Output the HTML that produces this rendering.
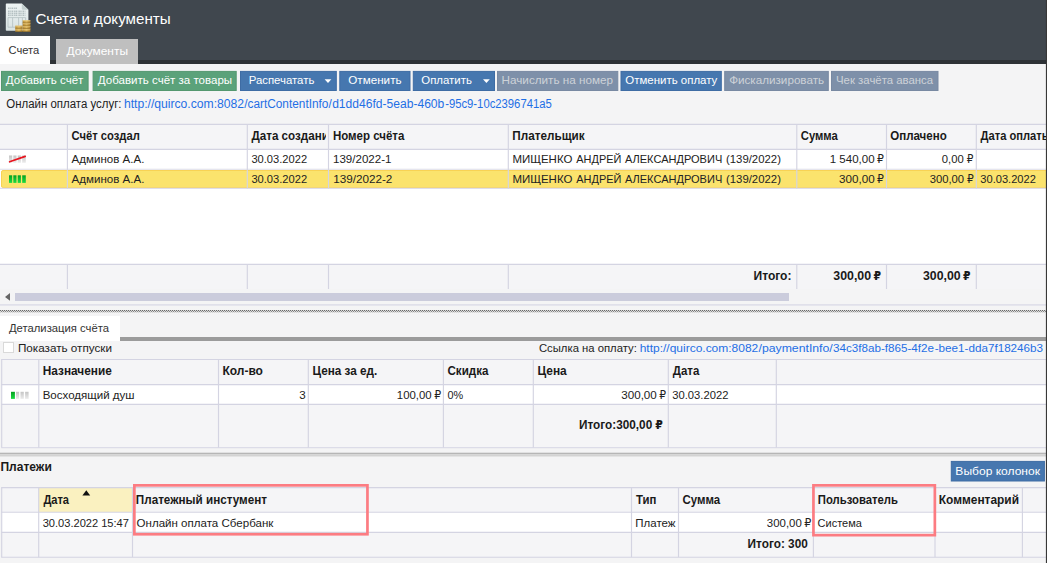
<!DOCTYPE html>
<html lang="ru">
<head>
<meta charset="utf-8">
<title>Счета и документы</title>
<style>
html,body{margin:0;padding:0}
body{width:1047px;height:563px;overflow:hidden;position:relative;background:#f4f4f5;font-family:"Liberation Sans","DejaVu Sans",sans-serif}
.b{position:absolute;box-sizing:border-box}
.t{position:absolute;white-space:pre;line-height:1;transform-origin:0 0}
.s{display:inline-block;transform-origin:0 0}
.clip{position:absolute;left:0;top:0;height:563px;overflow:hidden}
.hl{position:absolute;height:1px;background:#d5d5e3}
.vl{position:absolute;width:1px;background:#d5d5e3}
.btn{position:absolute;top:71px;height:20px}
.g{background:#5ba27a}
.bl{background:#4676ae}
.ds{background:#7e90a9}
</style>
</head>
<body>
<!-- header -->
<div class="b" style="left:0;top:0;width:1047px;height:60px;background:#40474e"></div>
<div class="b" style="left:0;top:60px;width:1047px;height:4px;background:#2e3236"></div>
<div class="b" style="left:0;top:36px;width:50px;height:28px;background:#fff"></div>
<div class="b" style="left:55.6px;top:39px;width:82.6px;height:25px;background:#bfbfbf"></div>
<svg class="b" style="left:5px;top:3px" width="27" height="30" viewBox="0 0 27 30">
<defs><linearGradient id="pg" x1="0" y1="0" x2="0" y2="1"><stop offset="0" stop-color="#eef4f4"/><stop offset="1" stop-color="#d9e3e3"/></linearGradient>
<linearGradient id="gd" x1="0" y1="0" x2="1" y2="0"><stop offset="0" stop-color="#b88c36"/><stop offset="0.5" stop-color="#dcb65e"/><stop offset="1" stop-color="#a87c2c"/></linearGradient></defs>
<path d="M1.6 0.4h15.2l6.6 6.4v20.2a0.8 0.8 0 0 1-0.8 0.8H1.6a0.8 0.8 0 0 1-0.8-0.8V1.2a0.8 0.8 0 0 1 0.8-0.8z" fill="url(#pg)"/>
<path d="M16.8 0.4l6.6 6.4h-5.4a1.2 1.2 0 0 1-1.2-1.2z" fill="#c4d0d0"/>
<g stroke="#93a2a5" stroke-width="0.9" stroke-dasharray="1.6 0.7 0.9 0.5"><path d="M3 5.2h9.5M3 8.2h17.5M3 10.2h17.5M3 12.2h17.5"/></g>
<g stroke="#b4c0c2" stroke-width="0.8" fill="none"><path d="M3 14.6h17.6v9.6H3zM7.6 14.6v9.6M13.6 14.6v9.6M17.4 14.6v9.6"/></g>
<rect x="10.3" y="22.7" width="7.2" height="6" fill="url(#gd)"/>
<rect x="17.7" y="17.3" width="7.7" height="11.4" fill="url(#gd)"/>
<g stroke="#f0d68c" stroke-width="0.7"><path d="M10.3 23.1h7.2M10.3 26h7.2M17.7 17.7h7.7M17.7 20.5h7.7M17.7 23.3h7.7M17.7 26.1h7.7"/></g>
<g stroke="#8f6a22" stroke-width="0.6"><path d="M10.3 25.4h7.2M10.3 28.5h7.2M17.7 19.9h7.7M17.7 22.7h7.7M17.7 25.5h7.7M17.7 28.5h7.7"/></g>
</svg>
<!-- toolbar -->
<svg class="b" style="left:0;top:68px" width="1047" height="26" viewBox="0 68 1047 26"><rect x="1.5" y="71.4" width="86.6" height="19.1" fill="#5ba27a" stroke="#54986f"/><rect x="93.1" y="71.4" width="143.1" height="19.1" fill="#5ba27a" stroke="#54986f"/><rect x="240.5" y="71.4" width="95.8" height="19.1" fill="#4677af" stroke="#3e6ca4"/><rect x="339.8" y="71.4" width="70.2" height="19.1" fill="#4677af" stroke="#3e6ca4"/><rect x="413.3" y="71.4" width="81.2" height="19.1" fill="#4677af" stroke="#3e6ca4"/><rect x="497.5" y="71.4" width="120.3" height="19.1" fill="#7e90a9" stroke="#7889a2"/><rect x="621.0" y="71.4" width="100.3" height="19.1" fill="#4677af" stroke="#3e6ca4"/><rect x="724.7" y="71.4" width="103.6" height="19.1" fill="#7e90a9" stroke="#7889a2"/><rect x="831.5" y="71.4" width="106.5" height="19.1" fill="#7e90a9" stroke="#7889a2"/><path d="M324.6 79.3h6.8l-3.4 3.8z" fill="#fff"/><path d="M483.0 79.3h6.8l-3.4 3.8z" fill="#fff"/></svg>

<!-- table 1 -->
<div class="b" style="left:0;top:124px;width:1046px;height:25px;background:#f5f5f7"></div>
<div class="b" style="left:0;top:149px;width:1046px;height:116px;background:#fff"></div>
<div class="b" style="left:1px;top:170px;width:1048px;height:18px;background:#fbe36d;border:1px solid #f8d254;border-radius:2px"></div>
<div class="b" style="left:0;top:264.5px;width:1046px;height:24.5px;background:#f5f5f7"></div>
<!-- col lines header+rows -->
<!-- col lines footer -->
<!-- scrollbar -->
<div class="b" style="left:15px;top:293px;width:774.3px;height:7.7px;background:#cbccdc"></div>
<svg class="b" style="left:5px;top:292px" width="6" height="10" viewBox="0 0 6 10"><path d="M5 1v7.8L0 4.9z" fill="#666"/></svg>
<!-- status icons -->
<svg class="b" style="left:8px;top:154px" width="20" height="10" viewBox="0 0 20 10">
<defs><linearGradient id="gr" x1="0" y1="0" x2="0" y2="1"><stop offset="0" stop-color="#c4c4c4"/><stop offset="1" stop-color="#ececec"/></linearGradient></defs>
<rect x="1" y="1.5" width="3.2" height="7.3" fill="url(#gr)"/><rect x="5.3" y="1.5" width="3.2" height="7.3" fill="url(#gr)"/><rect x="9.7" y="1.5" width="3.2" height="7.3" fill="url(#gr)"/><rect x="14.2" y="1.5" width="3.6" height="7.3" fill="url(#gr)"/>
<path d="M1.6 7.8L17.2 2.4" stroke="#e8141e" stroke-width="1.7" stroke-linecap="round"/>
</svg>
<svg class="b" style="left:8px;top:174px" width="20" height="10" viewBox="0 0 20 10">
<defs><linearGradient id="gn" x1="0" y1="0" x2="0" y2="1"><stop offset="0" stop-color="#04a020"/><stop offset="1" stop-color="#1cdc44"/></linearGradient></defs>
<rect x="1" y="1.3" width="3.2" height="7.6" fill="url(#gn)"/><rect x="5.3" y="1.3" width="3.2" height="7.6" fill="url(#gn)"/><rect x="9.7" y="1.3" width="3.2" height="7.6" fill="url(#gn)"/><rect x="14.2" y="1.3" width="3.6" height="7.6" fill="url(#gn)"/>
</svg>
<!-- splitter dotted -->
<div class="b" style="left:0;top:310px;width:1046px;height:1px;background:repeating-linear-gradient(90deg,#6a6a6a 0,#6a6a6a 1px,#d8d8d8 1px,#d8d8d8 2px)"></div>
<div class="b" style="left:0;top:311px;width:1046px;height:1px;background:repeating-linear-gradient(90deg,#dcdcdc 0,#dcdcdc 1px,#8a8a8a 1px,#8a8a8a 2px)"></div>
<div class="b" style="left:0;top:312px;width:1046px;height:1px;background:repeating-linear-gradient(90deg,#d6d6d6 0,#d6d6d6 1px,#ececec 1px,#ececec 2px)"></div>
<!-- detail tab -->
<div class="b" style="left:0;top:316px;width:120.3px;height:25px;background:#fff"></div>
<div class="b" style="left:120.3px;top:337px;width:925.7px;height:4px;background:#9b9b9b"></div>
<div class="b" style="left:2.5px;top:341.5px;width:11px;height:11px;background:#fff;border:1px solid #d9d9d9"></div>
<!-- table 2 -->
<div class="b" style="left:1px;top:359.5px;width:1045px;height:25px;background:#f5f5f7"></div>
<div class="b" style="left:1px;top:384.5px;width:1045px;height:20px;background:#fff"></div>
<div class="b" style="left:1px;top:404.5px;width:1045px;height:42.5px;background:#f5f5f7"></div>
<svg class="b" style="left:10px;top:390px" width="20" height="10" viewBox="0 0 20 10">
<rect x="1" y="1.8" width="3.9" height="7.1" fill="url(#gn)"/><rect x="6" y="1.8" width="3.1" height="7.1" fill="url(#gr)"/><rect x="10.5" y="1.8" width="3.3" height="7.1" fill="url(#gr)"/><rect x="15.1" y="1.8" width="3.5" height="7.1" fill="url(#gr)"/>
</svg>
<!-- splitter 2 -->
<!-- payments -->
<svg class="b" style="left:940px;top:458px" width="107" height="26" viewBox="940 458 107 26"><rect x="951.3" y="461.4" width="93.1" height="19.6" fill="#4677af" stroke="#3e6ca4"/></svg>
<div class="b" style="left:1px;top:488px;width:1045px;height:24px;background:#f5f5f7"></div>
<div class="b" style="left:39px;top:488px;width:93.5px;height:24px;background:#faf1c0"></div>
<div class="b" style="left:1px;top:512px;width:1045px;height:20px;background:#fff"></div>
<div class="b" style="left:1px;top:532px;width:1045px;height:25px;background:#f5f5f7"></div>
<svg class="b" style="left:82px;top:490px" width="9" height="6" viewBox="0 0 9 6"><path d="M4.3 0.2L8.2 5.4H0.4z" fill="#111"/></svg>
<svg class="b" style="left:0;top:0" width="1047" height="563" viewBox="0 0 1047 563" fill="none"><path d="M0 124.3H1046" stroke="#d4d4e2" stroke-width="1.15"/><path d="M0 149.3H1046" stroke="#d4d4e2" stroke-width="1.15"/><path d="M0 264.4H1046" stroke="#d4d4e2" stroke-width="1.15"/><path d="M0 169.2H1046" stroke="#dcdce8" stroke-width="1.15"/><path d="M0 188.4H1046" stroke="#dedee9" stroke-width="1.15"/><path d="M0 304.8H1046" stroke="#e0e0ea" stroke-width="1.7"/><path d="M67.4 124.3V188.4" stroke="#d4d4e2" stroke-width="1.15"/><path d="M67.4 264.4V289" stroke="#d4d4e2" stroke-width="1.15"/><path d="M247.3 124.3V188.4" stroke="#d4d4e2" stroke-width="1.15"/><path d="M247.3 264.4V289" stroke="#d4d4e2" stroke-width="1.15"/><path d="M328.5 124.3V188.4" stroke="#d4d4e2" stroke-width="1.15"/><path d="M328.5 264.4V289" stroke="#d4d4e2" stroke-width="1.15"/><path d="M508.3 124.3V188.4" stroke="#d4d4e2" stroke-width="1.15"/><path d="M508.3 264.4V289" stroke="#d4d4e2" stroke-width="1.15"/><path d="M796.8 124.3V188.4" stroke="#d4d4e2" stroke-width="1.15"/><path d="M796.8 264.4V289" stroke="#d4d4e2" stroke-width="1.15"/><path d="M886.5 124.3V188.4" stroke="#d4d4e2" stroke-width="1.15"/><path d="M886.5 264.4V289" stroke="#d4d4e2" stroke-width="1.15"/><path d="M976.3 124.3V188.4" stroke="#d4d4e2" stroke-width="1.15"/><path d="M976.3 264.4V289" stroke="#d4d4e2" stroke-width="1.15"/><path d="M1.2 359.5H1046" stroke="#d4d4e2" stroke-width="1.15"/><path d="M1.2 384.6H1046" stroke="#d4d4e2" stroke-width="1.15"/><path d="M1.2 404.3H1046" stroke="#d4d4e2" stroke-width="1.15"/><path d="M1.2 447.6H1046" stroke="#dcdce8" stroke-width="1.15"/><rect x="0" y="452.7" width="1046" height="1.5" fill="#b6b6b6"/><rect x="0" y="454.2" width="1046" height="2.3" fill="#d3d3d3"/><path d="M1.7 359.5V447.6" stroke="#d4d4e2" stroke-width="1.15"/><path d="M38.8 359.5V447.6" stroke="#d4d4e2" stroke-width="1.15"/><path d="M218.5 359.5V447.6" stroke="#d4d4e2" stroke-width="1.15"/><path d="M308.3 359.5V447.6" stroke="#d4d4e2" stroke-width="1.15"/><path d="M443.4 359.5V447.6" stroke="#d4d4e2" stroke-width="1.15"/><path d="M533.3 359.5V447.6" stroke="#d4d4e2" stroke-width="1.15"/><path d="M668.3 359.5V447.6" stroke="#d4d4e2" stroke-width="1.15"/><path d="M776.3 359.5V447.6" stroke="#d4d4e2" stroke-width="1.15"/><path d="M1.2 487.6H1046" stroke="#d4d4e2" stroke-width="1.15"/><path d="M1.2 512.2H1046" stroke="#d4d4e2" stroke-width="1.15"/><path d="M1.2 532.3H1046" stroke="#d4d4e2" stroke-width="1.15"/><path d="M1.2 557.2H1046" stroke="#d4d4e2" stroke-width="1.15"/><path d="M1.7 487.6V557.2" stroke="#d4d4e2" stroke-width="1.15"/><path d="M38.7 487.6V557.2" stroke="#d4d4e2" stroke-width="1.15"/><path d="M132.5 487.6V557.2" stroke="#d4d4e2" stroke-width="1.15"/><path d="M631.5 487.6V557.2" stroke="#d4d4e2" stroke-width="1.15"/><path d="M678.5 487.6V557.2" stroke="#d4d4e2" stroke-width="1.15"/><path d="M813.4 487.6V557.2" stroke="#d4d4e2" stroke-width="1.15"/><path d="M935.0 487.6V557.2" stroke="#d4d4e2" stroke-width="1.15"/><path d="M1022.4 487.6V557.2" stroke="#d4d4e2" stroke-width="1.15"/></svg>
<!-- red highlight boxes -->
<svg class="b" style="left:0;top:470px" width="1047" height="80" viewBox="0 470 1047 80" fill="none" stroke="#fc7c82" stroke-width="2.7"><rect x="134.35" y="485.35" width="233.1" height="48.9"/><rect x="813.45" y="485.35" width="121.4" height="49.8"/></svg>
<!-- text -->
<span class="t" style="left:0;top:0;font-size:15.2px;color:#ffffff;transform:translate(35.42px,11.08px) scaleX(0.9978)">Счета и документы</span>
<span class="t" style="left:0;top:0;font-size:11.5px;color:#333;transform:translate(8.50px,44.75px) scaleX(0.9698)">Счета</span>
<span class="t" style="left:0;top:0;font-size:11.5px;color:#ffffff;transform:translate(66.42px,46.15px) scaleX(1.0387)">Документы</span>
<span class="t" style="left:0;top:0;font-size:11.5px;color:#ffffff;transform:translate(5.83px,75.15px) scaleX(1.0037)">Добавить счёт</span>
<span class="t" style="left:0;top:0;font-size:11.5px;color:#ffffff;transform:translate(97.83px,75.15px) scaleX(1.0029)">Добавить счёт за товары</span>
<span class="t" style="left:0;top:0;font-size:11.5px;color:#ffffff;transform:translate(248.70px,75.15px) scaleX(0.9888)">Распечатать</span>
<span class="t" style="left:0;top:0;font-size:11.5px;color:#ffffff;transform:translate(348.29px,75.15px) scaleX(1.0134)">Отменить</span>
<span class="t" style="left:0;top:0;font-size:11.5px;color:#ffffff;transform:translate(421.30px,75.15px) scaleX(0.9920)">Оплатить</span>
<span class="t" style="left:0;top:0;font-size:11.5px;color:#cdd2d8;transform:translate(501.55px,75.15px) scaleX(1.0172)">Начислить на номер</span>
<span class="t" style="left:0;top:0;font-size:11.5px;color:#ffffff;transform:translate(625.31px,75.15px) scaleX(0.9964)">Отменить оплату</span>
<span class="t" style="left:0;top:0;font-size:11.5px;color:#cdd2d8;transform:translate(729.13px,75.15px) scaleX(1.0145)">Фискализировать</span>
<span class="t" style="left:0;top:0;font-size:11.5px;color:#cdd2d8;transform:translate(836.02px,75.15px) scaleX(0.9900)">Чек зачёта аванса</span>
<span class="t" style="left:0;top:0;font-size:12.0px;color:#222;transform:translate(6.35px,97.63px) scaleX(0.9531)">Онлайн оплата услуг:</span>
<span class="t" style="left:0;top:0;font-size:12.0px;color:#1f6fe5;transform:translate(123.89px,97.63px)"><span class="s" style="transform:translateX(0.00px) scaleX(1.0124)">http://quirco.com:8082</span><span class="s" style="transform:translateX(1.33px) scaleX(0.9864)">/cartContentInfo/</span><span class="s" style="transform:translateX(1.24px) scaleX(1.0064)">d1dd46fd-5eab-460b</span><span class="s" style="transform:translateX(2.25px) scaleX(0.9399)">-95c9-10c2396741a5</span></span>
<span class="t" style="left:0;top:0;font-size:12.4px;color:#1a1a1a;transform:translate(71.55px,129.91px) scaleX(0.9048);font-weight:700">Счёт создал</span>
<div class="clip" style="width:325.5px"><span class="t" style="left:0;top:0;font-size:12.4px;color:#1a1a1a;transform:translate(251.47px,129.91px) scaleX(0.9386);font-weight:700">Дата создания</span></div>
<span class="t" style="left:0;top:0;font-size:12.4px;color:#1a1a1a;transform:translate(332.88px,129.91px) scaleX(0.9285);font-weight:700">Номер счёта</span>
<span class="t" style="left:0;top:0;font-size:12.4px;color:#1a1a1a;transform:translate(512.35px,129.91px) scaleX(0.9457);font-weight:700">Плательщик</span>
<span class="t" style="left:0;top:0;font-size:12.4px;color:#1a1a1a;transform:translate(800.76px,129.91px) scaleX(0.9100);font-weight:700">Сумма</span>
<span class="t" style="left:0;top:0;font-size:12.4px;color:#1a1a1a;transform:translate(890.22px,129.91px) scaleX(0.9306);font-weight:700">Оплачено</span>
<div class="clip" style="width:1045.5px"><span class="t" style="left:0;top:0;font-size:12.4px;color:#1a1a1a;transform:translate(980.54px,129.91px) scaleX(0.8990);font-weight:700">Дата оплаты</span></div>
<span class="t" style="left:0;top:0;font-size:11.5px;color:#222;transform:translate(71.61px,154.05px) scaleX(1.0040)">Админов А.А.</span>
<span class="t" style="left:0;top:0;font-size:11.5px;color:#222;transform:translate(251.38px,154.15px) scaleX(0.9679)">30.03.2022</span>
<span class="t" style="left:0;top:0;font-size:11.5px;color:#222;transform:translate(332.98px,154.15px) scaleX(1.0058)">139/2022-1</span>
<span class="t" style="left:0;top:0;font-size:11.5px;color:#222;transform:translate(512.43px,154.15px)"><span class="s" style="transform:translateX(0.00px) scaleX(0.9966)">МИЩЕНКО </span><span class="s" style="transform:translateX(0.88px) scaleX(0.9499)">АНДРЕЙ </span><span class="s" style="transform:translateX(-1.50px) scaleX(0.9587)">АЛЕКСАНДРОВИЧ </span><span class="s" style="transform:translateX(-5.44px) scaleX(0.9874)">(139/2022)</span></span>
<span class="t" style="left:0;top:0;font-size:11.5px;color:#222;transform:translate(829.74px,154.15px)"><span class="s" style="transform:translateX(0.00px) scaleX(1.0007)">1 540,00 </span><span class="s" style="transform:translateX(-0.80px) scaleX(0.9422)">₽</span></span>
<span class="t" style="left:0;top:0;font-size:11.5px;color:#222;transform:translate(941.73px,154.15px)"><span class="s" style="transform:translateX(0.00px) scaleX(0.9810)">0,00 </span><span class="s" style="transform:translateX(-0.98px) scaleX(0.9141)">₽</span></span>
<span class="t" style="left:0;top:0;font-size:11.5px;color:#222;transform:translate(71.61px,173.95px) scaleX(1.0040)">Админов А.А.</span>
<span class="t" style="left:0;top:0;font-size:11.5px;color:#222;transform:translate(251.38px,173.95px) scaleX(0.9679)">30.03.2022</span>
<span class="t" style="left:0;top:0;font-size:11.5px;color:#222;transform:translate(333.13px,173.95px) scaleX(1.0178)">139/2022-2</span>
<span class="t" style="left:0;top:0;font-size:11.5px;color:#222;transform:translate(512.43px,173.95px)"><span class="s" style="transform:translateX(0.00px) scaleX(0.9966)">МИЩЕНКО </span><span class="s" style="transform:translateX(0.88px) scaleX(0.9499)">АНДРЕЙ </span><span class="s" style="transform:translateX(-1.50px) scaleX(0.9587)">АЛЕКСАНДРОВИЧ </span><span class="s" style="transform:translateX(-5.44px) scaleX(0.9874)">(139/2022)</span></span>
<span class="t" style="left:0;top:0;font-size:11.5px;color:#222;transform:translate(839.03px,173.95px)"><span class="s" style="transform:translateX(0.00px) scaleX(1.0122)">300,00 </span><span class="s" style="transform:translateX(-0.10px) scaleX(0.9414)">₽</span></span>
<span class="t" style="left:0;top:0;font-size:11.5px;color:#222;transform:translate(929.64px,173.95px)"><span class="s" style="transform:translateX(0.00px) scaleX(0.9780)">300,00 </span><span class="s" style="transform:translateX(-0.68px) scaleX(0.9282)">₽</span></span>
<span class="t" style="left:0;top:0;font-size:11.5px;color:#222;transform:translate(980.29px,173.95px) scaleX(0.9646)">30.03.2022</span>
<span class="t" style="left:0;top:0;font-size:12.4px;color:#1a1a1a;transform:translate(753.47px,270.11px) scaleX(0.9728);font-weight:700">Итого:</span>
<span class="t" style="left:0;top:0;font-size:12.4px;color:#1a1a1a;transform:translate(833.28px,270.11px);font-weight:700"><span class="s" style="transform:translateX(0.00px) scaleX(0.9975)">300,00 </span><span class="s" style="transform:translateX(-0.90px) scaleX(0.8770)">₽</span></span>
<span class="t" style="left:0;top:0;font-size:12.4px;color:#1a1a1a;transform:translate(923.02px,270.11px);font-weight:700"><span class="s" style="transform:translateX(0.00px) scaleX(0.9929)">300,00 </span><span class="s" style="transform:translateX(-0.93px) scaleX(0.8684)">₽</span></span>
<span class="t" style="left:0;top:0;font-size:11.5px;color:#333;transform:translate(8.98px,323.15px) scaleX(0.9796)">Детализация счёта</span>
<span class="t" style="left:0;top:0;font-size:11.5px;color:#222;transform:translate(17.88px,343.35px) scaleX(1.0169)">Показать отпуски</span>
<span class="t" style="left:0;top:0;font-size:11.5px;color:#222;transform:translate(538.93px,343.35px) scaleX(0.9820)">Ссылка на оплату:</span>
<span class="t" style="left:0;top:0;font-size:11.5px;color:#1f6fe5;transform:translate(639.69px,343.35px)"><span class="s" style="transform:translateX(0.00px) scaleX(1.0419)">http://quirco.com:8082</span><span class="s" style="transform:translateX(4.83px) scaleX(1.0651)">/paymentInfo/</span><span class="s" style="transform:translateX(10.28px) scaleX(1.0130)">34c3f8ab-f865-4f2e</span><span class="s" style="transform:translateX(12.03px) scaleX(1.0146)">-bee1-dda7f18246b3</span></span>
<span class="t" style="left:0;top:0;font-size:12.4px;color:#1a1a1a;transform:translate(42.77px,365.21px) scaleX(0.9539);font-weight:700">Назначение</span>
<span class="t" style="left:0;top:0;font-size:12.4px;color:#1a1a1a;transform:translate(222.42px,365.21px) scaleX(0.9684);font-weight:700">Кол-во</span>
<span class="t" style="left:0;top:0;font-size:12.4px;color:#1a1a1a;transform:translate(312.49px,365.21px) scaleX(0.9462);font-weight:700">Цена за ед.</span>
<span class="t" style="left:0;top:0;font-size:12.4px;color:#1a1a1a;transform:translate(447.50px,365.21px) scaleX(0.9350);font-weight:700">Скидка</span>
<span class="t" style="left:0;top:0;font-size:12.4px;color:#1a1a1a;transform:translate(537.45px,365.21px) scaleX(0.9610);font-weight:700">Цена</span>
<span class="t" style="left:0;top:0;font-size:12.4px;color:#1a1a1a;transform:translate(672.83px,365.21px) scaleX(0.9236);font-weight:700">Дата</span>
<span class="t" style="left:0;top:0;font-size:11.5px;color:#222;transform:translate(42.67px,389.95px) scaleX(1.0021)">Восходящий душ</span>
<span class="t" style="left:0;top:0;font-size:11.5px;color:#222;transform:translate(299.26px,389.95px) scaleX(1.0070)">3</span>
<span class="t" style="left:0;top:0;font-size:11.5px;color:#222;transform:translate(396.80px,389.95px)"><span class="s" style="transform:translateX(0.00px) scaleX(0.9895)">100,00 </span><span class="s" style="transform:translateX(-0.62px) scaleX(0.9465)">₽</span></span>
<span class="t" style="left:0;top:0;font-size:11.5px;color:#222;transform:translate(447.56px,389.95px) scaleX(0.9443)">0%</span>
<span class="t" style="left:0;top:0;font-size:11.5px;color:#222;transform:translate(621.23px,389.95px)"><span class="s" style="transform:translateX(0.00px) scaleX(1.0110)">300,00 </span><span class="s" style="transform:translateX(-0.08px) scaleX(0.9314)">₽</span></span>
<span class="t" style="left:0;top:0;font-size:11.5px;color:#222;transform:translate(672.29px,389.95px) scaleX(0.9747)">30.03.2022</span>
<span class="t" style="left:0;top:0;font-size:12.4px;color:#1a1a1a;transform:translate(579.04px,419.41px);font-weight:700"><span class="s" style="transform:translateX(0.00px) scaleX(0.9506)">Итого:300,00 </span><span class="s" style="transform:translateX(-3.81px) scaleX(0.8799)">₽</span></span>
<span class="t" style="left:0;top:0;font-size:12.4px;color:#1a1a1a;transform:translate(0.47px,460.81px) scaleX(0.9709);font-weight:700">Платежи</span>
<span class="t" style="left:0;top:0;font-size:11.8px;color:#ffffff;transform:translate(955.36px,466.13px) scaleX(1.0203)">Выбор колонок</span>
<span class="t" style="left:0;top:0;font-size:12.4px;color:#1a1a1a;transform:translate(43.41px,493.81px) scaleX(0.8931);font-weight:700">Дата</span>
<span class="t" style="left:0;top:0;font-size:12.4px;color:#1a1a1a;transform:translate(135.84px,493.81px) scaleX(0.9427);font-weight:700">Платежный инстумент</span>
<span class="t" style="left:0;top:0;font-size:12.4px;color:#1a1a1a;transform:translate(636.10px,493.81px) scaleX(0.9177);font-weight:700">Тип</span>
<span class="t" style="left:0;top:0;font-size:12.4px;color:#1a1a1a;transform:translate(682.51px,493.81px) scaleX(0.9251);font-weight:700">Сумма</span>
<span class="t" style="left:0;top:0;font-size:12.4px;color:#1a1a1a;transform:translate(817.75px,493.81px) scaleX(0.9133);font-weight:700">Пользователь</span>
<span class="t" style="left:0;top:0;font-size:12.4px;color:#1a1a1a;transform:translate(938.77px,493.81px) scaleX(0.9618);font-weight:700">Комментарий</span>
<span class="t" style="left:0;top:0;font-size:11.5px;color:#222;transform:translate(42.67px,517.95px) scaleX(0.9636)">30.03.2022 15:47</span>
<span class="t" style="left:0;top:0;font-size:11.5px;color:#222;transform:translate(136.54px,517.95px) scaleX(1.0045)">Онлайн оплата Сбербанк</span>
<span class="t" style="left:0;top:0;font-size:11.5px;color:#222;transform:translate(635.35px,517.95px) scaleX(0.9981)">Платеж</span>
<span class="t" style="left:0;top:0;font-size:11.5px;color:#222;transform:translate(766.86px,517.95px)"><span class="s" style="transform:translateX(0.00px) scaleX(0.9912)">300,00 </span><span class="s" style="transform:translateX(-0.58px) scaleX(0.9695)">₽</span></span>
<span class="t" style="left:0;top:0;font-size:11.5px;color:#222;transform:translate(817.57px,517.95px) scaleX(0.9563)">Система</span>
<span class="t" style="left:0;top:0;font-size:12.4px;color:#1a1a1a;transform:translate(747.62px,537.81px) scaleX(0.9518);font-weight:700">Итого: 300</span>
<!-- right edge -->
<svg class="b" style="left:1040px;top:0" width="7" height="563" viewBox="1040 0 7 563"><rect x="1045.9" y="0" width="1.1" height="563" fill="#383838"/></svg>
</body>
</html>
